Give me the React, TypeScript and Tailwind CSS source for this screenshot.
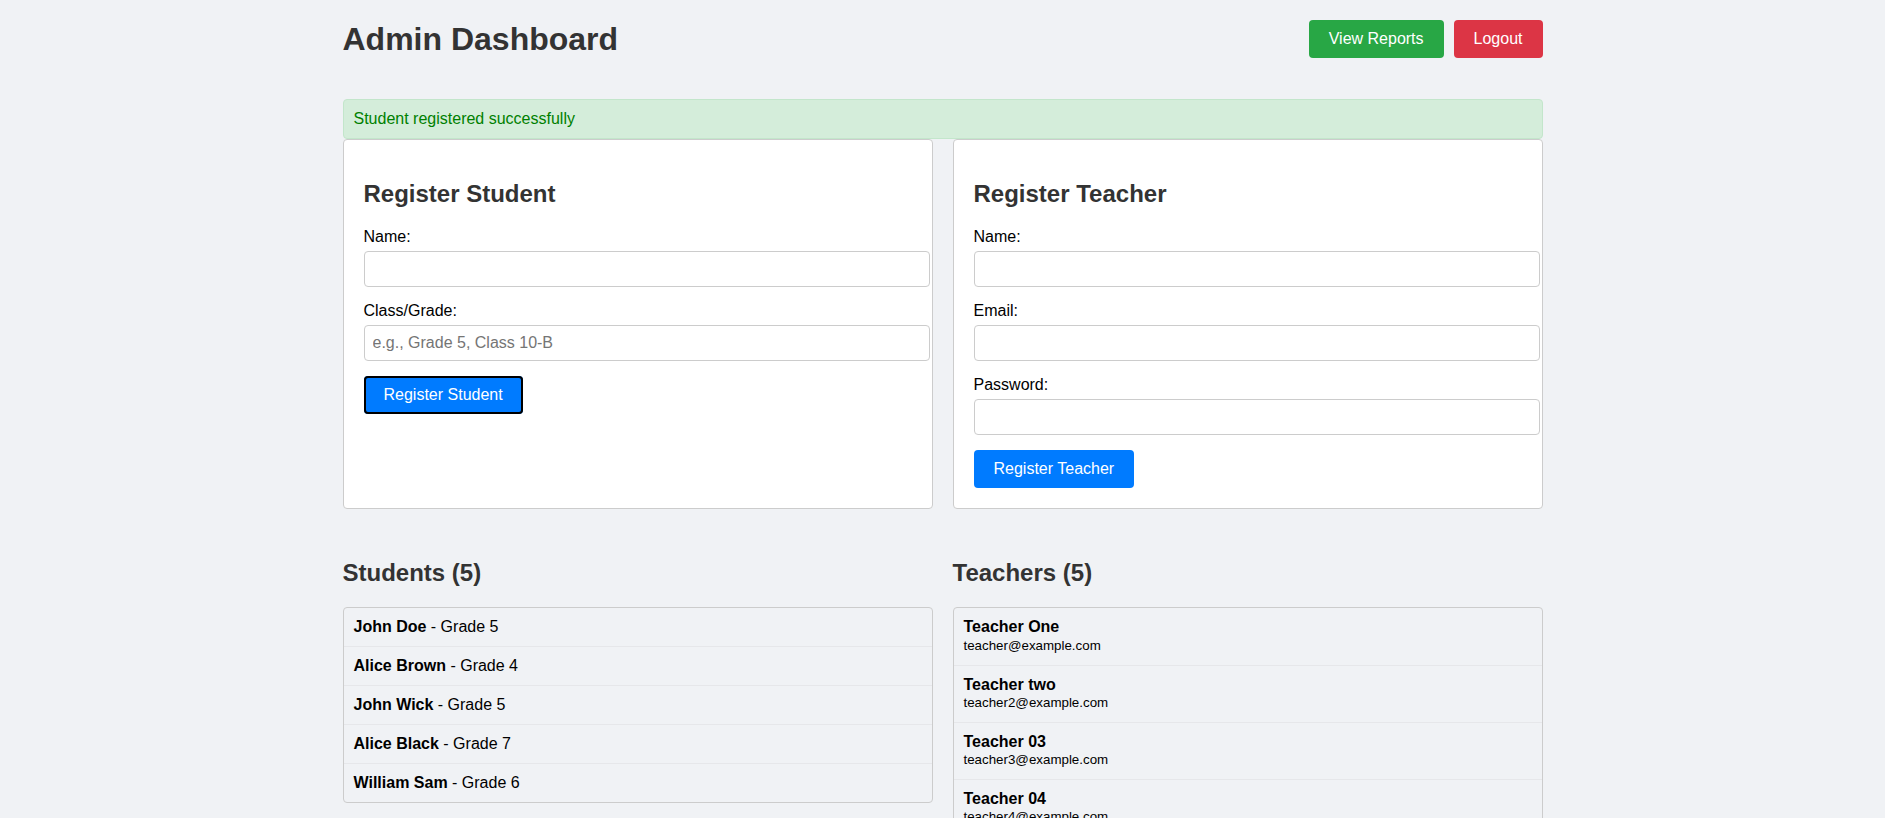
import React, { useState } from "react";

type Student = { name: string; grade: string };
type Teacher = { name: string; email: string };

const students: Student[] = [
  { name: "John Doe", grade: "Grade 5" },
  { name: "Alice Brown", grade: "Grade 4" },
  { name: "John Wick", grade: "Grade 5" },
  { name: "Alice Black", grade: "Grade 7" },
  { name: "William Sam", grade: "Grade 6" },
];

const teachers: Teacher[] = [
  { name: "Teacher One", email: "teacher@example.com" },
  { name: "Teacher two", email: "teacher2@example.com" },
  { name: "Teacher 03", email: "teacher3@example.com" },
  { name: "Teacher 04", email: "teacher4@example.com" },
  { name: "Teacher 05", email: "teacher5@example.com" },
];

const styles = {
  card: `bg-white border border-[#cccccc] rounded-[4px] px-5 pb-5 pt-5`,
  h2: `text-[24px] leading-[27.6px] font-bold text-[#333333] mt-[20px] mb-[20px]`,
  listH2: `text-[24px] leading-[27.6px] font-bold text-[#333333] mt-[20px] mb-[21px]`,
  label: `block text-[16px] leading-[18.4px] text-black mb-[5px]`,
  input: `block w-[calc(100%+18px)] h-[35.5px] px-2 text-[16px] border border-[#cccccc] rounded-[4px] bg-white text-black placeholder:text-[#757575] outline-none`,
  blueBtn: `h-[38px] px-5 text-[16px] leading-[18px] text-white bg-[#007bff] rounded-[4px]`,
};

const Field = ({ label, placeholder, type = "text" }: { label: string; placeholder?: string; type?: string }) => (
  <div className="mb-[15px]">
    <label className={styles.label}>{label}</label>
    <input type={type} placeholder={placeholder} className={styles.input} />
  </div>
);

const App = () => {
  const [message] = useState("Student registered successfully");

  return (
    <div className="min-h-screen bg-[#f0f2f5] font-['Liberation_Sans',Arial,sans-serif] text-black">
      <div className="max-w-[1200px] mx-auto">
        <header className="flex items-center justify-between pt-5 pb-[21px] mb-5">
          <h1 className="m-0 text-[32px] leading-[36.8px] font-bold text-[#333333]">Admin Dashboard</h1>
          <div className="flex gap-[10px]">
            <button className="h-[38px] px-5 text-[16px] leading-[18px] text-white bg-[#28a745] rounded-[4px]">
              View Reports
            </button>
            <button className="h-[38px] px-5 text-[16px] leading-[18px] text-white bg-[#dc3545] rounded-[4px]">
              Logout
            </button>
          </div>
        </header>

        <div className="px-[10px] py-[10px] text-[16px] leading-[18.4px] text-[#008000] bg-[#d4edda] border border-[#c3e6cb] rounded-[4px]">
          {message}
        </div>

        <div className="grid grid-cols-2 gap-5">
          <div className={styles.card}>
            <h2 className={styles.h2}>Register Student</h2>
            <Field label="Name:" />
            <Field label="Class/Grade:" placeholder="e.g., Grade 5, Class 10-B" />
            <button className={`${styles.blueBtn} shadow-[inset_0_0_0_2px_#000000]`}>Register Student</button>
          </div>

          <div className={styles.card}>
            <h2 className={styles.h2}>Register Teacher</h2>
            <Field label="Name:" />
            <Field label="Email:" type="email" />
            <Field label="Password:" type="password" />
            <button className={styles.blueBtn}>Register Teacher</button>
          </div>
        </div>

        <div className="grid grid-cols-2 gap-5 mt-[30px] pb-10">
          <div>
            <h2 className={styles.listH2}>Students ({students.length})</h2>
            <ul className="border border-[#cccccc] rounded-[4px]">
              {students.map((s, i) => (
                <li
                  key={s.name}
                  className={`px-[10px] py-[10px] text-[16px] leading-[17.9px] ${i < students.length - 1 ? "border-b border-[#e6e7ea]" : ""}`}
                >
                  <strong>{s.name}</strong> - {s.grade}
                </li>
              ))}
            </ul>
          </div>

          <div>
            <h2 className={styles.listH2}>Teachers ({teachers.length})</h2>
            <ul className="border border-[#cccccc] rounded-[4px]">
              {teachers.map((t, i) => (
                <li
                  key={t.email}
                  className={`px-[10px] py-[10px] ${i < teachers.length - 1 ? "border-b border-[#e6e7ea]" : ""}`}
                >
                  <strong className="block text-[16px] leading-[18.6px]">{t.name}</strong>
                  <small className="block text-[13.33px] leading-[17.6px]">{t.email}</small>
                </li>
              ))}
            </ul>
          </div>
        </div>
      </div>
    </div>
  );
};

export default App;
